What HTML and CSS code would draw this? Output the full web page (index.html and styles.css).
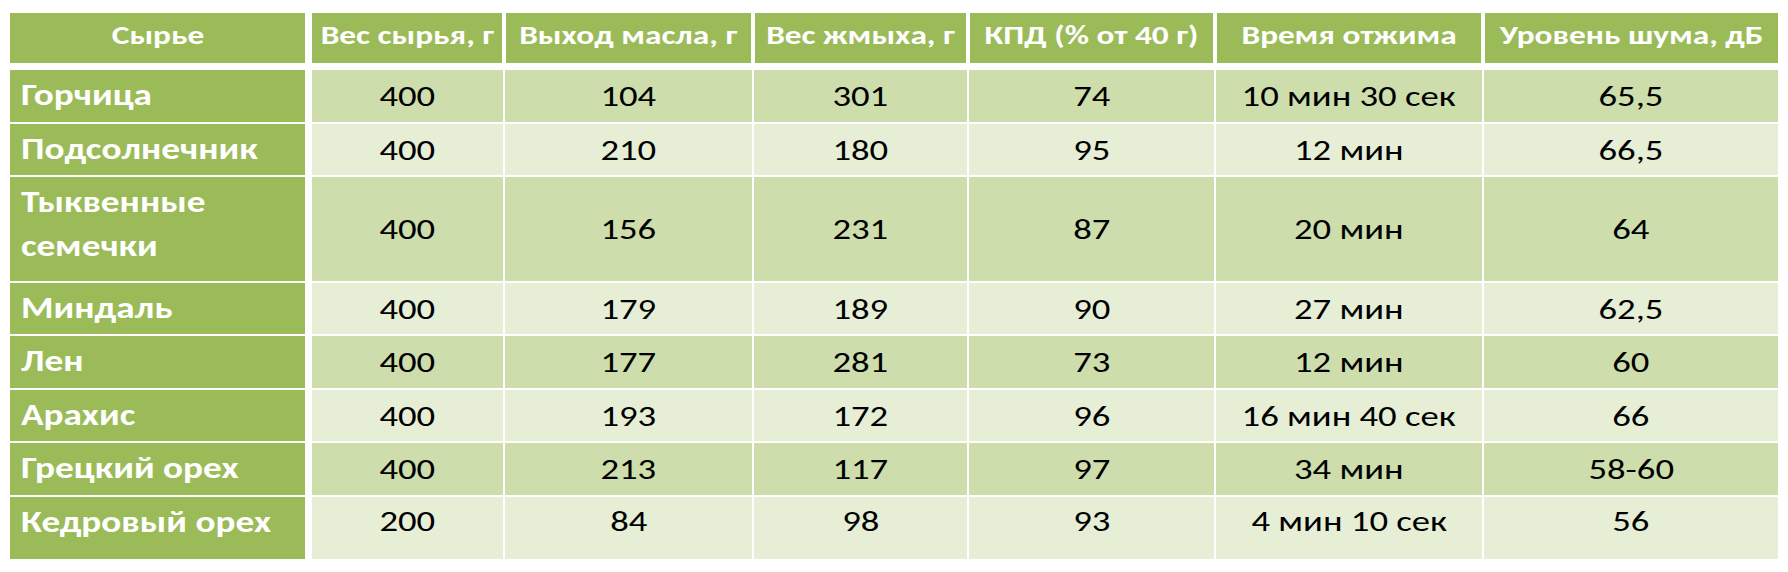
FILE: index.html
```html
<!DOCTYPE html>
<html lang="ru">
<head>
<meta charset="utf-8">
<title>Сравнение маслопрессов</title>
<link rel="stylesheet" href="styles.css">
</head>
<body>
<div class="table">
  <div class="row head">
    <div class="cell"><span class="t">Сырье</span></div>
    <div class="cell"><span class="t">Вес сырья, г</span></div>
    <div class="cell"><span class="t">Выход масла, г</span></div>
    <div class="cell"><span class="t">Вес жмыха, г</span></div>
    <div class="cell"><span class="t">КПД (% от 40 г)</span></div>
    <div class="cell"><span class="t">Время отжима</span></div>
    <div class="cell"><span class="t">Уровень шума, дБ</span></div>
  </div>
  <div class="row odd r1">
    <div class="cell name"><span class="t">Горчица</span></div>
    <div class="cell"><span class="t">400</span></div>
    <div class="cell"><span class="t">104</span></div>
    <div class="cell"><span class="t">301</span></div>
    <div class="cell"><span class="t">74</span></div>
    <div class="cell"><span class="t">10 мин 30 сек</span></div>
    <div class="cell"><span class="t">65,5</span></div>
  </div>
  <div class="row even r2">
    <div class="cell name"><span class="t">Подсолнечник</span></div>
    <div class="cell"><span class="t">400</span></div>
    <div class="cell"><span class="t">210</span></div>
    <div class="cell"><span class="t">180</span></div>
    <div class="cell"><span class="t">95</span></div>
    <div class="cell"><span class="t">12 мин</span></div>
    <div class="cell"><span class="t">66,5</span></div>
  </div>
  <div class="row odd r3">
    <div class="cell name"><span class="t">Тыквенные<br>семечки</span></div>
    <div class="cell"><span class="t">400</span></div>
    <div class="cell"><span class="t">156</span></div>
    <div class="cell"><span class="t">231</span></div>
    <div class="cell"><span class="t">87</span></div>
    <div class="cell"><span class="t">20 мин</span></div>
    <div class="cell"><span class="t">64</span></div>
  </div>
  <div class="row even r4">
    <div class="cell name"><span class="t">Миндаль</span></div>
    <div class="cell"><span class="t">400</span></div>
    <div class="cell"><span class="t">179</span></div>
    <div class="cell"><span class="t">189</span></div>
    <div class="cell"><span class="t">90</span></div>
    <div class="cell"><span class="t">27 мин</span></div>
    <div class="cell"><span class="t">62,5</span></div>
  </div>
  <div class="row odd r5">
    <div class="cell name"><span class="t">Лен</span></div>
    <div class="cell"><span class="t">400</span></div>
    <div class="cell"><span class="t">177</span></div>
    <div class="cell"><span class="t">281</span></div>
    <div class="cell"><span class="t">73</span></div>
    <div class="cell"><span class="t">12 мин</span></div>
    <div class="cell"><span class="t">60</span></div>
  </div>
  <div class="row even r6">
    <div class="cell name"><span class="t">Арахис</span></div>
    <div class="cell"><span class="t">400</span></div>
    <div class="cell"><span class="t">193</span></div>
    <div class="cell"><span class="t">172</span></div>
    <div class="cell"><span class="t">96</span></div>
    <div class="cell"><span class="t">16 мин 40 сек</span></div>
    <div class="cell"><span class="t">66</span></div>
  </div>
  <div class="row odd r7">
    <div class="cell name"><span class="t">Грецкий орех</span></div>
    <div class="cell"><span class="t">400</span></div>
    <div class="cell"><span class="t">213</span></div>
    <div class="cell"><span class="t">117</span></div>
    <div class="cell"><span class="t">97</span></div>
    <div class="cell"><span class="t">34 мин</span></div>
    <div class="cell"><span class="t">58-60</span></div>
  </div>
  <div class="row even r8">
    <div class="cell name"><span class="t">Кедровый орех</span></div>
    <div class="cell"><span class="t">200</span></div>
    <div class="cell"><span class="t">84</span></div>
    <div class="cell"><span class="t">98</span></div>
    <div class="cell"><span class="t">93</span></div>
    <div class="cell"><span class="t">4 мин 10 сек</span></div>
    <div class="cell"><span class="t">56</span></div>
  </div>
</div>
</body>
</html>
```
FILE: styles.css
```css
html, body {
  margin: 0;
  padding: 0;
  background: #ffffff;
}

body {
  font-family: Carlito, Calibri, "Liberation Sans", sans-serif;
  color: #000000;
}

.table {
  margin: 13px 10px;
  width: 1768px;
  display: flex;
  flex-direction: column;
  row-gap: 2px;
}

.row {
  display: grid;
  grid-template-columns: 297px 197px 249px 215px 247px 268px 295px;
}

.cell {
  box-sizing: border-box;
  display: flex;
  justify-content: center;
  align-items: center;
  border-left: 1px solid #ffffff;
  border-right: 1px solid #ffffff;
  font-size: 29.33px;
  line-height: 44px;
}

.t {
  display: inline-block;
  white-space: nowrap;
  transform: scaleX(1.25);
}

/* header */
.head {
  height: 50px;
  margin-bottom: 5px;
}

.head .cell {
  background: #9bbb59;
  color: #ffffff;
  font-weight: bold;
  font-size: 26.67px;
  line-height: 40px;
  align-items: flex-start;
  padding-top: 2px;
  border-left-width: 2px;
  border-right-width: 2px;
}

.head .cell:first-child { border-left: 0; }
.head .cell:last-child { border-right: 0; }

/* body */
.odd .cell { background: #cdddac; }
.even .cell { background: #e6eed6; }

.row .cell:first-child { border-left: 0; }
.row .cell:last-child { border-right: 0; }
.row .cell:nth-child(2) { border-left-width: 5px; }

.row .cell.name {
  background: #9bbb59;
  color: #ffffff;
  font-weight: bold;
  justify-content: flex-start;
  align-items: flex-start;
  padding: 3px 0 0 11px;
  border-right-width: 2px;
}

.name .t {
  transform-origin: left center;
  transform: scaleX(1.27);
  white-space: normal;
}

.r1 { height: 52px; }
.r2 { height: 51px; }
.r3 { height: 104px; }
.r4 { height: 51px; }
.r5 { height: 52px; }
.r6 { height: 51px; }
.r7 { height: 52px; }
.r8 { height: 62px; }

.r8 .cell { padding-bottom: 14px; }
.r8 .cell.name { padding-bottom: 0; }
```
